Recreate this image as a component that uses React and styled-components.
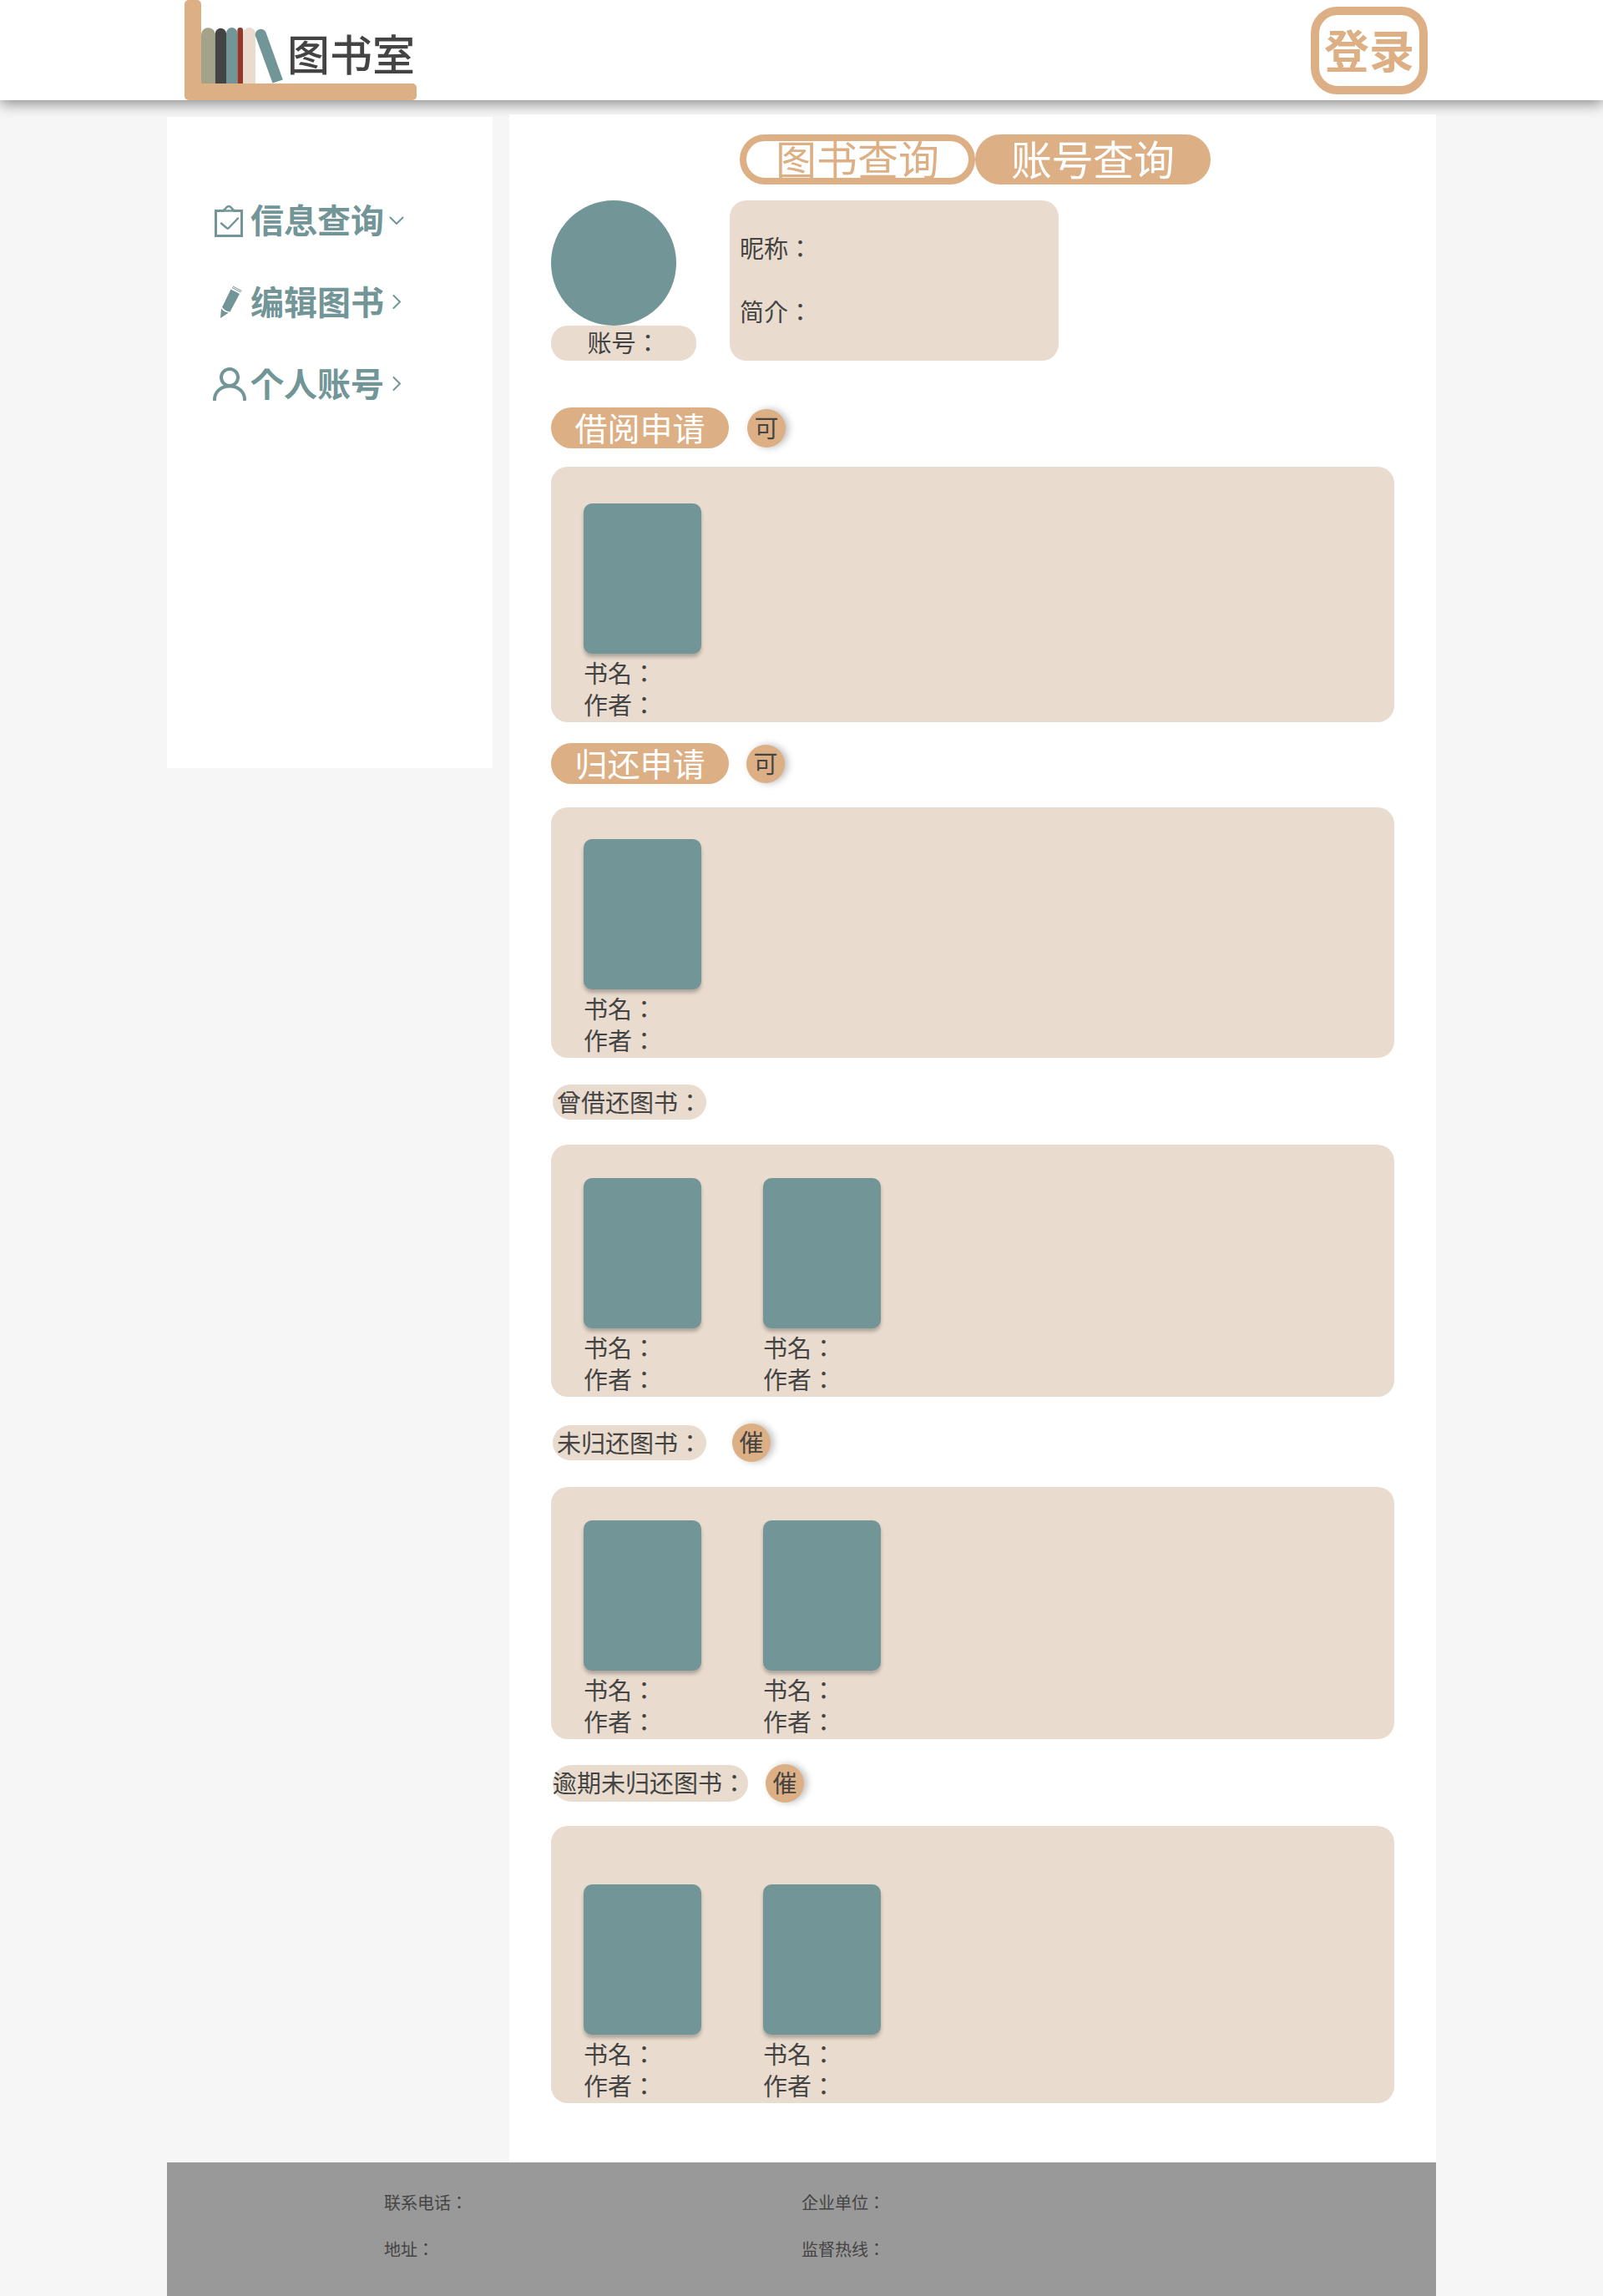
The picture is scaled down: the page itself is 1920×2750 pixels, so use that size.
import React from "react";
import styled, { createGlobalStyle } from "styled-components";

const tan = "#dcaf84";
const sand = "#e9dccf";
const teal = "#729597";
const ink = "#444444";

const GlobalStyle = createGlobalStyle`
  * { box-sizing: border-box; }
  body {
    margin: 0;
    background: #f6f6f6;
    color: ${ink};
    font-family: "Noto Sans CJK JP", "Noto Sans CJK SC", sans-serif;
    font-size: 29px;
    line-height: 38px;
  }
  button { font-family: inherit; padding: 0; cursor: pointer; }
  h2, p, ul { margin: 0; padding: 0; }
`;

const Header = styled.header`
  height: 120px;
  background: #fff;
  box-shadow: 0 4px 16px rgba(0, 0, 0, 0.45);
`;

const HeaderInner = styled.div`
  display: flex;
  justify-content: space-between;
  max-width: 1520px;
  height: 100%;
  margin: 0 auto;
  padding: 0 10px 0 21px;
`;

const Brand = styled.a`
  display: grid;
  width: 278px;
  height: 120px;
  color: ${ink};
  text-decoration: none;
  > * { grid-area: 1 / 1; }
`;

const BrandName = styled.span`
  justify-self: end;
  padding: 28px 2px 0 0;
  font-size: 51px;
  line-height: 70px;
  font-weight: 500;
`;

const LoginButton = styled.button`
  width: 140px;
  height: 105px;
  margin-top: 8px;
  padding-bottom: 4px;
  border: 10px solid ${tan};
  border-radius: 32px;
  background: #fff;
  color: ${tan};
  font-size: 54px;
  line-height: 80px;
  font-weight: 700;
`;

const Main = styled.div`
  display: flex;
  align-items: flex-start;
  gap: 20px;
  max-width: 1520px;
  margin: 0 auto;
  padding-top: 17px;
`;

const Sidebar = styled.nav`
  display: flex;
  flex-direction: column;
  flex: 0 0 390px;
  gap: 58px;
  min-height: 780px;
  margin-top: 3px;
  padding: 104px 55px;
  background: #fff;
`;

const NavLink = styled.a`
  display: flex;
  align-items: center;
  gap: 5px;
  height: 40px;
  color: ${teal};
  font-size: 40px;
  line-height: 40px;
  font-weight: 700;
  text-decoration: none;
  white-space: nowrap;
  svg { flex: none; }
`;

const NavLabel = styled.span`
  padding-bottom: 4px;
`;

const Content = styled.main`
  flex: 1;
  min-width: 0;
  padding: 24px 50px 71px;
  background: #fff;
`;

const Tabs = styled.div`
  display: flex;
  justify-content: center;
  padding-left: 6px;
`;

const Tab = styled.button`
  width: 282px;
  height: 60px;
  padding-bottom: 4px;
  border: 8px solid ${tan};
  border-radius: 30px;
  background: ${(p) => (p.$active ? tan : "#fff")};
  color: ${(p) => (p.$active ? "#fff" : tan)};
  font-size: 49px;
  line-height: 40px;
  white-space: nowrap;
`;

const Profile = styled.section`
  display: flex;
  gap: 40px;
  margin-top: 19px;
`;

const Account = styled.div`
  width: 174px;
`;

const Avatar = styled.div`
  width: 150px;
  height: 150px;
  border-radius: 50%;
  background: ${teal};
`;

const AccountName = styled.p`
  height: 42px;
  border-radius: 20px;
  background: ${sand};
  line-height: 38px;
  text-align: center;
`;

const Bio = styled.div`
  display: flex;
  flex-direction: column;
  gap: 38px;
  width: 394px;
  padding: 37px 12px 41px;
  border-radius: 20px;
  background: ${sand};
`;

const SectionBlock = styled.section`
  margin-top: ${(p) => p.$space}px;
`;

const SectionHead = styled.div`
  display: flex;
  align-items: center;
  gap: ${(p) => p.$gap}px;
  min-height: 46px;
  margin-bottom: ${(p) => p.$below}px;
`;

const RequestTitle = styled.h2`
  width: 213px;
  height: 49px;
  border-radius: 25px;
  background: ${tan};
  color: #fff;
  font-size: 39px;
  line-height: 46px;
  font-weight: 400;
  text-align: center;
`;

const ListTitle = styled.h2`
  width: ${(p) => (p.$wide ? 234 : 184)}px;
  height: ${(p) => (p.$wide ? 44 : 42)}px;
  margin-left: 2px;
  padding-left: ${(p) => (p.$wide ? 0 : 5)}px;
  border-radius: 22px;
  background: ${sand};
  font-size: 29px;
  line-height: 40px;
  font-weight: 400;
  white-space: nowrap;
`;

const RoundButton = styled.button`
  width: 46px;
  height: 46px;
  padding-bottom: 4px;
  border: 0;
  border-radius: 50%;
  background: ${tan};
  box-shadow: 4px 0 8px rgba(0, 0, 0, 0.25);
  color: ${ink};
  font-size: 29px;
  line-height: 42px;
`;

const Panel = styled.ul`
  display: flex;
  gap: 74px;
  padding: ${(p) => p.$top}px 39px 0;
  border-radius: 20px;
  background: ${sand};
  list-style: none;
`;

const Book = styled.li`
  width: 141px;
  padding-bottom: 3px;
`;

const Cover = styled.div`
  height: 180px;
  margin-bottom: 3px;
  border-radius: 10px;
  background: ${teal};
  box-shadow: 0 4px 4px rgba(0, 0, 0, 0.25);
`;

const Footer = styled.footer`
  display: grid;
  grid-template-columns: 500px 1fr;
  align-content: start;
  row-gap: 26px;
  max-width: 1520px;
  min-height: 160px;
  margin: 0 auto;
  padding: 33px 20px 33px 260px;
  background: #999;
  font-size: 20px;
  line-height: 30px;
`;

function Bookshelf() {
  return (
    <svg width="278" height="120" viewBox="0 0 278 120" aria-hidden="true">
      <path d="M20 100V41.500a8.300 8.300 0 0 1 16.700 0V100z" fill="#a3a38a" />
      <path d="M36.700 100V39.700a6.700 6.700 0 0 1 13.300 0V100z" fill="#444" />
      <path d="M50 100V39.700a6.700 6.700 0 0 1 13.400 0V100z" fill={teal} />
      <path d="M63.400 100V36.300a3.300 3.300 0 0 1 6.600 0V100z" fill="#94372b" />
      <path d="M70 100V40.500a7.500 7.500 0 0 1 15 0V100z" fill={sand} />
      <path d="M84.900 43a6.700 6.700 0 0 1 12.500-4.500L117.800 95.500L105.500 99.500z" fill={teal} />
      <path
        d="M5 0H15a5 5 0 0 1 5 5V100H273a5 5 0 0 1 5 5V115a5 5 0 0 1-5 5H5a5 5 0 0 1-5-5V5a5 5 0 0 1 5-5z"
        fill={tan}
      />
    </svg>
  );
}

function ClipboardIcon() {
  return (
    <svg width="40" height="40" viewBox="0 0 40 40" fill="none" stroke={teal} aria-hidden="true">
      <path d="M14 8.500H3.500V38.500H34.500V8.500H24" strokeWidth="3" />
      <path d="M13 7.500C15.500 7 15.500 3 19 3S22.500 7 25 7.500L22.500 8.500H15.500z" strokeWidth="2.500" strokeLinejoin="round" />
      <path d="M10 23.500L17 29.500Q18 30 19 29L30 17.500" strokeWidth="2.500" strokeLinecap="round" />
    </svg>
  );
}

function PencilIcon() {
  return (
    <svg width="40" height="40" viewBox="0 0 40 40" fill={teal} aria-hidden="true">
      <path d="M21.500 4.500L32 10L20.500 31.500Q15 31 11 26z" />
      <path d="M10 27.500Q13.500 32 19 32.500L9 39z" />
      <path d="M23 2.500L33.500 8M24 1L34.500 6.500" fill="none" stroke={teal} strokeWidth="1" />
    </svg>
  );
}

function PersonIcon() {
  return (
    <svg width="40" height="40" viewBox="0 0 40 40" fill="none" stroke={teal} strokeWidth="4" aria-hidden="true">
      <circle cx="20" cy="12" r="10" />
      <path d="M2 38.500C2 29 10 22.500 20 22.500S38 29 38 38.500" strokeLinecap="round" />
    </svg>
  );
}

function Chevron({ open }) {
  return (
    <svg width="20" height="20" viewBox="0 0 20 20" fill="none" stroke={teal} strokeWidth="2" strokeLinecap="round" strokeLinejoin="round" aria-hidden="true">
      <path d={open ? "M2.500 6.500L10 14L17.500 6.500" : "M6.500 2L14 9.500L6.500 17"} />
    </svg>
  );
}

const navItems = [
  { label: "信息查询", Icon: ClipboardIcon, open: true },
  { label: "编辑图书", Icon: PencilIcon },
  { label: "个人账号", Icon: PersonIcon },
];

const sections = [
  { title: "借阅申请", request: true, action: "可", books: 1, space: 56, gap: 22, below: 22, top: 44 },
  { title: "归还申请", request: true, action: "可", books: 1, space: 25, gap: 21, below: 28, top: 38 },
  { title: "曾借还图书：", books: 2, space: 30, gap: 0, below: 28, top: 40 },
  { title: "未归还图书：", action: "催", books: 2, space: 32, gap: 31, below: 30, top: 40 },
  { title: "逾期未归还图书：", wide: true, action: "催", books: 2, space: 30, gap: 21, below: 28, top: 70 },
];

function BookSection({ title, request, wide, action, books, space, gap, below, top }) {
  return (
    <SectionBlock $space={space}>
      <SectionHead $gap={gap} $below={below}>
        {request ? <RequestTitle>{title}</RequestTitle> : <ListTitle $wide={wide}>{title}</ListTitle>}
        {action && <RoundButton type="button">{action}</RoundButton>}
      </SectionHead>
      <Panel $top={top}>
        {Array.from({ length: books }, (_, i) => (
          <Book key={i}>
            <Cover />
            <p>书名：</p>
            <p>作者：</p>
          </Book>
        ))}
      </Panel>
    </SectionBlock>
  );
}

export default function App() {
  return (
    <>
      <GlobalStyle />
      <Header>
        <HeaderInner>
          <Brand href="#">
            <Bookshelf />
            <BrandName>图书室</BrandName>
          </Brand>
          <LoginButton type="button">登录</LoginButton>
        </HeaderInner>
      </Header>
      <Main>
        <Sidebar>
          {navItems.map(({ label, Icon, open }) => (
            <NavLink href="#" key={label}>
              <Icon />
              <NavLabel>{label}</NavLabel>
              <Chevron open={open} />
            </NavLink>
          ))}
        </Sidebar>
        <Content>
          <Tabs>
            <Tab type="button">图书查询</Tab>
            <Tab type="button" $active>账号查询</Tab>
          </Tabs>
          <Profile>
            <Account>
              <Avatar />
              <AccountName>账号：</AccountName>
            </Account>
            <Bio>
              <p>昵称：</p>
              <p>简介：</p>
            </Bio>
          </Profile>
          {sections.map((section) => (
            <BookSection key={section.title} {...section} />
          ))}
        </Content>
      </Main>
      <Footer>
        <span>联系电话：</span>
        <span>企业单位：</span>
        <span>地址：</span>
        <span>监督热线：</span>
      </Footer>
    </>
  );
}
